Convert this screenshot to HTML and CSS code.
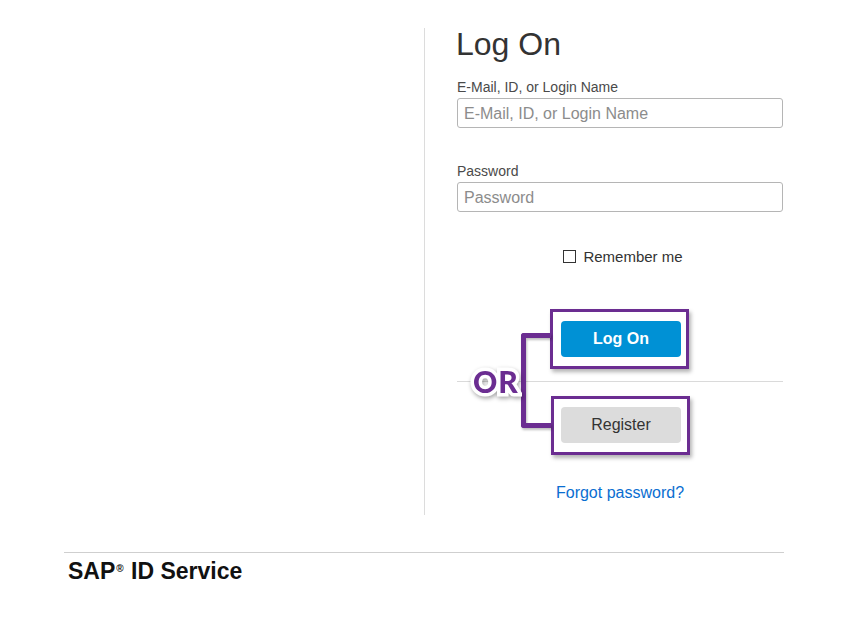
FILE: index.html
```html
<!DOCTYPE html>
<html lang="en">
<head>
<meta charset="utf-8">
<title>Log On</title>
<link rel="stylesheet" href="styles.css">
</head>
<body>
<div class="page">
  <div class="main">
    <div class="spacer"></div>
    <div class="panel">
      <h1 class="title">Log On</h1>
      <div class="field">
        <label class="label" for="user">E-Mail, ID, or Login Name</label>
        <input class="input" id="user" type="text" placeholder="E-Mail, ID, or Login Name">
      </div>
      <div class="field field-gap">
        <label class="label" for="pw">Password</label>
        <input class="input" id="pw" type="password" placeholder="Password">
      </div>
      <label class="remember"><input class="check" type="checkbox"><span>Remember me</span></label>
      <div class="actions">
        <button class="btn btn-primary" type="button">Log On</button>
        <div class="divider"></div>
        <button class="btn btn-secondary" type="button">Register</button>
        <div class="hl hl-logon"></div>
        <div class="hl hl-register"></div>
        <div class="bracket"></div>
        <div class="or">OR</div>
      </div>
      <div class="forgot-row"><a class="forgot" href="#">Forgot password?</a></div>
    </div>
  </div>
  <div class="footer">SAP<sup class="reg">®</sup> ID Service</div>
</div>
</body>
</html>
```
FILE: styles.css
```css
body {
  margin: 0;
  background: #fff;
  font-family: "Liberation Sans", Arial, sans-serif;
  color: #333;
}

.page {
  width: 720px;
  margin-left: 64px;
  padding-top: 28px;
}

.main {
  display: flex;
}

.spacer {
  width: 360px;
}

.panel {
  width: 326px;
  border-left: 1px solid #dcdcdc;
  padding: 0 0 13px 32px;
}

.title {
  margin: 0 0 19px -1px;
  font-size: 32px;
  line-height: 32px;
  font-weight: 400;
  color: #333;
}

.label {
  display: block;
  font-size: 14px;
  line-height: 16px;
  color: #4a4a4a;
  margin-bottom: 3px;
}

.input {
  display: block;
  width: 100%;
  height: 30px;
  box-sizing: border-box;
  border: 1px solid #b5b5b5;
  border-radius: 3px;
  padding: 1px 6px 0;
  font-family: "Liberation Sans", Arial, sans-serif;
  font-size: 16px;
  color: #333;
  outline: none;
  margin: 0;
}

.input::placeholder {
  color: #8c8c8c;
}

.field-gap {
  margin-top: 35px;
}

.remember {
  display: flex;
  justify-content: center;
  align-items: center;
  gap: 7px;
  height: 20px;
  margin-top: 34px;
  padding-left: 6px;
  font-size: 15px;
  color: #333;
}

.check {
  appearance: none;
  -webkit-appearance: none;
  width: 13px;
  height: 13px;
  margin: 0;
  box-sizing: border-box;
  border: 1px solid #333;
  background: #fff;
}

.actions {
  position: relative;
  margin-top: 55px;
}

.btn {
  display: block;
  margin: 0 auto;
  position: relative;
  left: 1px;
  width: 120px;
  height: 36px;
  border: 0;
  border-radius: 4px;
  font-family: "Liberation Sans", Arial, sans-serif;
  font-size: 16px;
  padding: 0;
}

.btn-primary {
  background: #0091d5;
  color: #fff;
  font-weight: 700;
}

.btn-secondary {
  background: #dcdcdc;
  color: #333;
}

.divider {
  height: 1px;
  background: #dadada;
  margin: 24px 0 25px;
}

.hl {
  position: absolute;
  box-sizing: border-box;
  border: 3px solid #6b2d91;
  box-shadow: 2px 3px 4px rgba(0, 0, 0, 0.3);
}

.hl-logon {
  left: 93px;
  top: -12px;
  width: 139px;
  height: 60px;
}

.hl-register {
  left: 94px;
  top: 75px;
  width: 139px;
  height: 59px;
}

.bracket {
  position: absolute;
  left: 64px;
  top: 12px;
  width: 30px;
  height: 95px;
  box-sizing: border-box;
  border: 5px solid #6b2d91;
  border-right: 0;
  border-radius: 3px 0 0 3px;
  filter: drop-shadow(1px 2px 1px rgba(0, 0, 0, 0.25));
}

.or {
  position: absolute;
  left: 16px;
  top: 45px;
  font-family: Lato, "Liberation Sans", sans-serif;
  font-weight: 900;
  font-size: 30px;
  line-height: 30px;
  letter-spacing: 1px;
  color: #6b2d91;
  -webkit-text-stroke: 7px #fff;
  paint-order: stroke fill;
  filter: drop-shadow(1px 2px 2px rgba(0, 0, 0, 0.35));
}

.forgot-row {
  margin-top: 41px;
  text-align: center;
  font-size: 16px;
  line-height: 18px;
}

.forgot {
  color: #0a6ed1;
  text-decoration: none;
}

.footer {
  margin-top: 37px;
  border-top: 1px solid #cfcfcf;
  padding: 5px 0 0 4px;
  font-size: 23px;
  line-height: 26px;
  font-weight: 700;
  color: #111;
}

.reg {
  font-size: 10px;
  vertical-align: top;
  position: relative;
  top: -2px;
  margin: 0 1px;
}
```
